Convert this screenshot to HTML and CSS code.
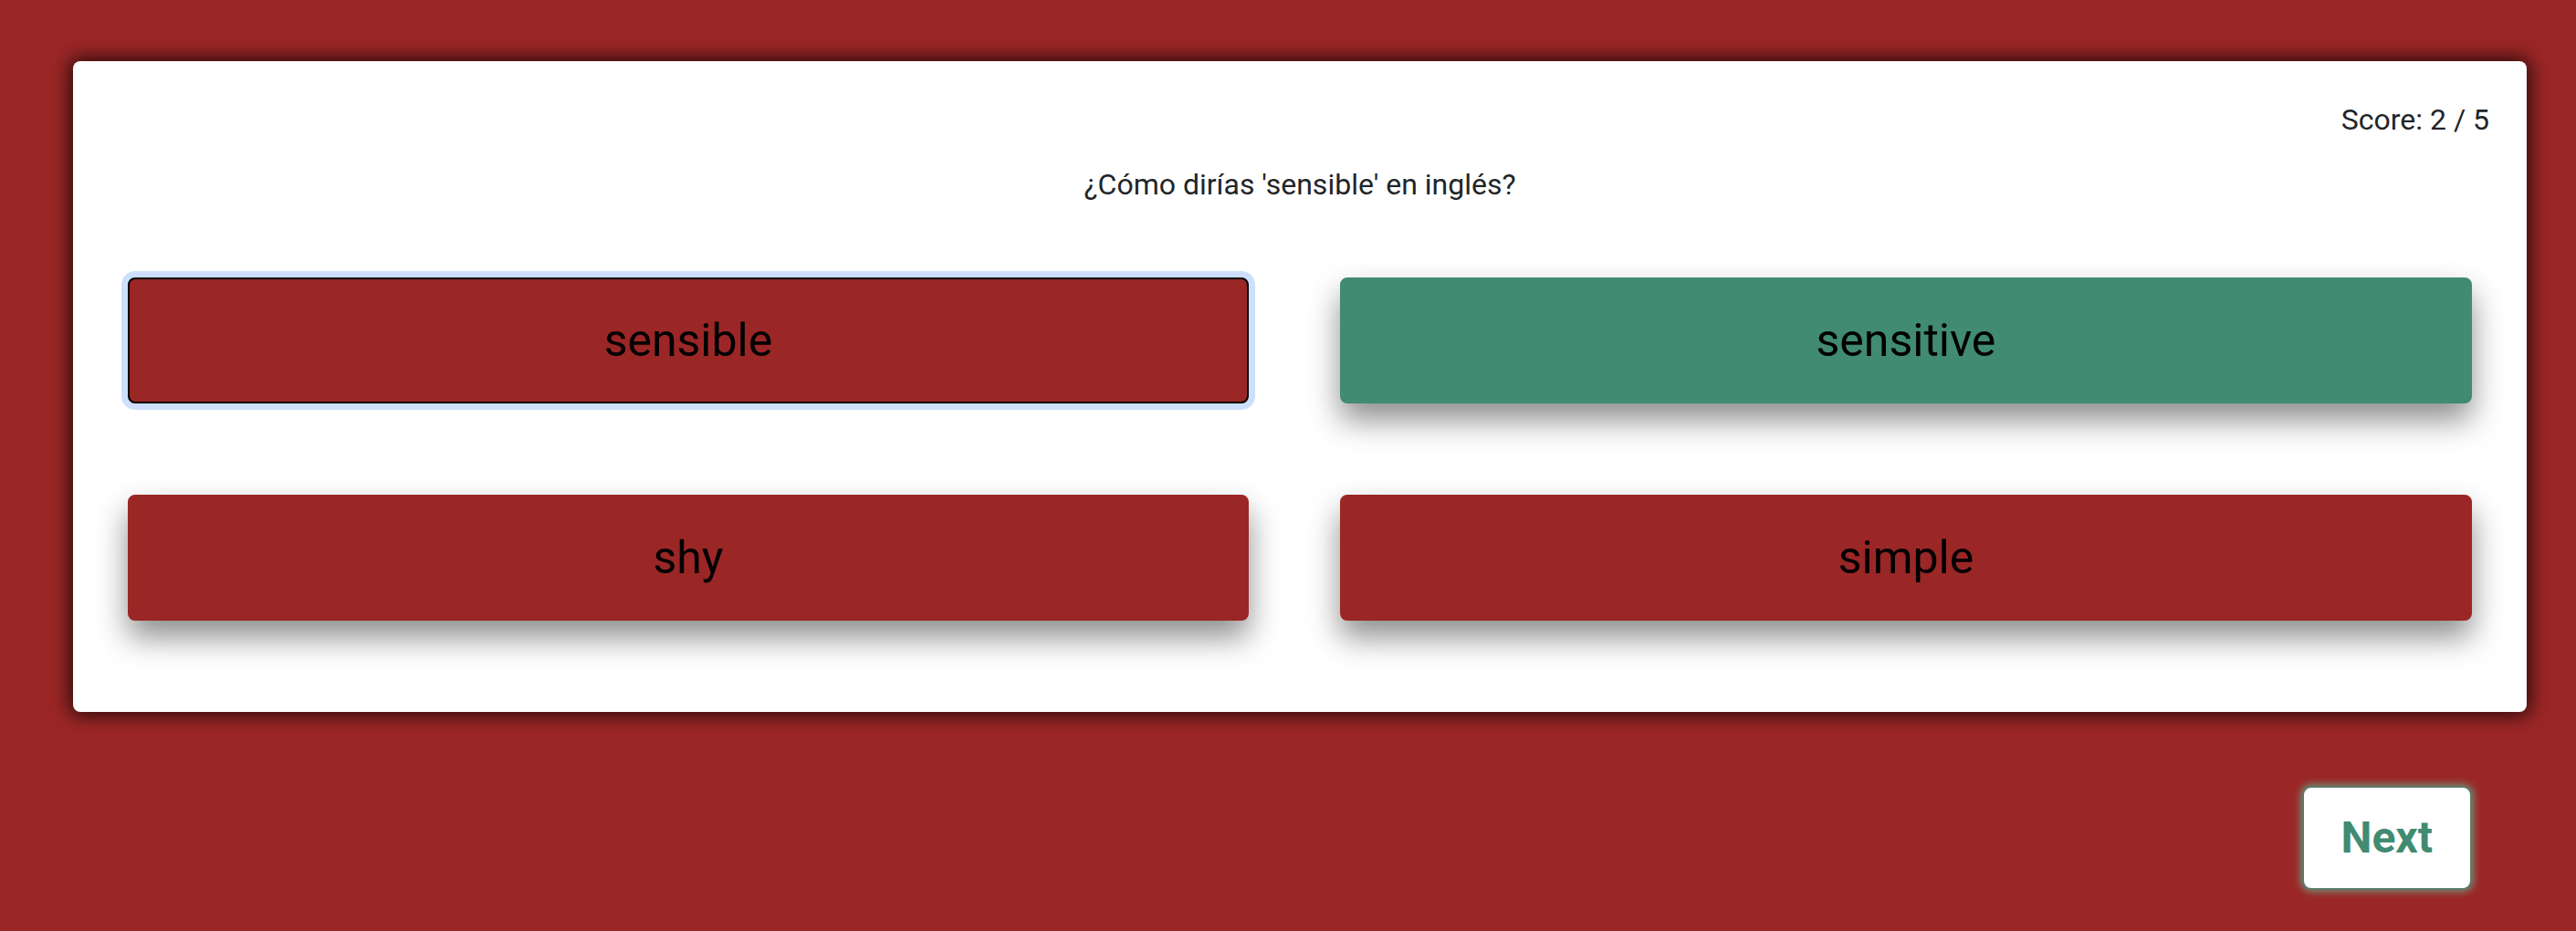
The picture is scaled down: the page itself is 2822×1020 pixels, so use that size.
FILE: index.html
```html
<!DOCTYPE html>
<html lang="es">
<head>
<meta charset="utf-8">
<title>Quiz</title>
<link rel="stylesheet" href="styles.css">
</head>
<body>
<main class="page">
  <section class="card">
    <div class="score">Score: 2 / 5</div>
    <div class="question">¿Cómo dirías 'sensible' en inglés?</div>
    <div class="options">
      <button class="option option-focused">sensible</button>
      <button class="option option-correct">sensitive</button>
      <button class="option">shy</button>
      <button class="option">simple</button>
    </div>
  </section>
  <div class="actions">
    <button class="next">Next</button>
  </div>
</main>
</body>
</html>
```

FILE: styles.css
```css
html, body {
  margin: 0;
  padding: 0;
  background: #9b2626;
  font-family: Roboto, "Liberation Sans", Arial, sans-serif;
  height: 100%;
}

.page {
  padding: 67px 54px 0 80px;
}

.card {
  background: #ffffff;
  border-radius: 8px;
  box-shadow: 0 0 20px 4px rgba(0, 0, 0, 0.72);
  padding: 40px 41px 100px;
  color: #212529;
}

.score {
  text-align: right;
  font-size: 32px;
  line-height: 48px;
}

.question {
  text-align: center;
  font-size: 32px;
  line-height: 48px;
  margin-top: 23px;
}

.options {
  display: grid;
  grid-template-columns: auto auto;
  column-gap: 100px;
  row-gap: 100px;
  margin: 78px 19px 0;
}

.option {
  font-family: inherit;
  font-size: 50px;
  line-height: 72px;
  color: #000;
  background: #9b2626;
  border: 2px solid #9b2626;
  border-radius: 8px;
  padding: 31px 20px;
  box-shadow: 0 18px 34px rgba(0, 0, 0, 0.45);
  cursor: pointer;
}

.option-correct {
  background: #408b71;
  border-color: #408b71;
}

.option-focused {
  border-color: #000;
  box-shadow: 0 0 0 7px #cddffc;
}

.actions {
  display: flex;
  justify-content: flex-end;
  padding-right: 60px;
  margin-top: 81px;
}

.next {
  font-family: inherit;
  font-size: 48px;
  font-weight: 700;
  line-height: 72px;
  color: #408b71;
  background: #ffffff;
  border: 2px solid #5b7a68;
  border-radius: 10px;
  padding: 19px 41px;
  box-shadow: 0 0 8px 2px rgba(110, 160, 130, 0.85);
  cursor: pointer;
}
```
